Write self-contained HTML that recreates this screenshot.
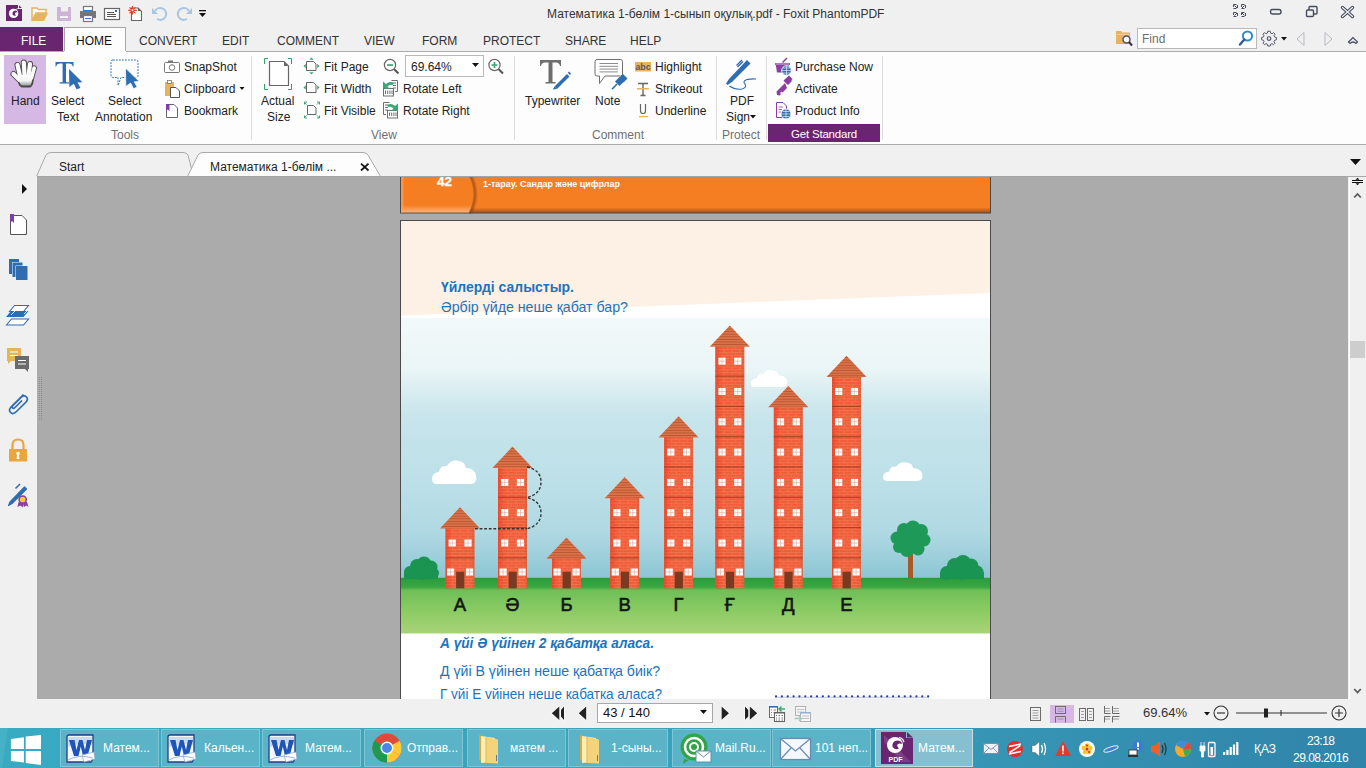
<!DOCTYPE html>
<html><head><meta charset="utf-8">
<style>
*{margin:0;padding:0;box-sizing:border-box}
html,body{width:1366px;height:768px;overflow:hidden;background:#f0f0f0;font-family:"Liberation Sans",sans-serif;font-size:12px;color:#222}
.a{position:absolute}
.t{position:absolute;white-space:nowrap;line-height:14px}
</style></head><body>
<!-- title bar -->
<div class="a" style="left:0;top:0;width:1366px;height:28px;background:#f0f0f0"></div>
<div class="t" style="left:547px;top:7px;color:#333">Математика 1-бөлім 1-сынып оқулық.pdf - Foxit PhantomPDF</div>
<svg class="a" style="left:0;top:0" width="220" height="27">
 <path d="M6 5H18V9H22V21H6Z" fill="#6a2570"/><path d="M19 5.2L21.8 8H19Z" fill="#6a2570"/>
 <circle cx="13.6" cy="13.4" r="4.7" fill="#fff"/><path d="M12.5 14.5Q12 11 15.5 10.5Q17.5 10.5 17.5 12.5Q16 12 15 13Q14.5 14 16 15.5Q14 16.5 12.5 14.5Z" fill="#6a2570"/>
 <path d="M16 9.5L18 8.5" stroke="#fff" stroke-width="0.8"/>
 <path d="M32 8H37L38.5 9.5H46V13H36L32 21Z" fill="#fff" stroke="#e8b25e" stroke-width="1.5"/>
 <path d="M35.5 13H48L44 21H32Z" fill="#e8b25e"/>
 <path d="M57 7H71V21H57Z" fill="#cdb3d6"/><rect x="61" y="7" width="7" height="4.5" fill="#f0f0f0"/><rect x="60" y="16" width="8" height="2" fill="#f0f0f0"/>
 <rect x="83.5" y="6.5" width="9" height="6" fill="#fff" stroke="#777" stroke-width="1.2"/><rect x="84" y="10" width="8" height="2" fill="#3b78c0"/>
 <path d="M80 11H96V18H80Z" fill="#777"/><rect x="83.5" y="15.5" width="9" height="6" fill="#fff" stroke="#777" stroke-width="1.2"/><rect x="85" y="18" width="6" height="1" fill="#3b78c0"/>
 <rect x="104.5" y="8.5" width="15" height="11" fill="#fff" stroke="#666" stroke-width="1.2"/><rect x="107" y="12" width="7" height="1" fill="#555"/><rect x="107" y="14" width="9" height="1" fill="#555"/><rect x="107" y="16" width="9" height="1" fill="#555"/><rect x="115" y="10" width="2" height="2" fill="#2f6fb5"/>
 <path d="M131.5 8H138L141.5 11.5V20.5H131.5Z" fill="#fff" stroke="#666" stroke-width="1.1"/><path d="M138 7.5L141.5 11H138Z" fill="#666"/>
 <path d="M132.5 6V14.6M128.2 10.3H136.8M129.5 7.3L135.5 13.3M135.5 7.3L129.5 13.3" stroke="#d9412b" stroke-width="1.2"/><circle cx="132.5" cy="10.3" r="1" fill="#fff"/>
 <path d="M155 11A6 6 0 1 1 157 19" fill="none" stroke="#a9c7e2" stroke-width="2"/><path d="M152 8V14H158Z" fill="#a9c7e2"/>
 <path d="M189 11A6 6 0 1 0 187 19" fill="none" stroke="#a9c7e2" stroke-width="2"/><path d="M192 8V14H186Z" fill="#a9c7e2"/>
 <rect x="199" y="10" width="7" height="1.3" fill="#111"/><path d="M199 13H206L202.5 17Z" fill="#111"/>
</svg>
<svg class="a" style="left:1225px;top:0" width="141" height="27">
 <g fill="none" stroke="#444c5e" stroke-width="1.2">
 <path d="M8.5 4.5H12.5V8.5H8.5ZM16.5 4.5H20.5V8.5H16.5ZM8.5 12.5H12.5V16.5H8.5ZM16.5 12.5H20.5V16.5H16.5Z" stroke-width="1" stroke-dasharray="3 1.5"/>
 <path d="M9.5 5.5L12 8M19.5 5.5L17 8M9.5 15.5L12 13M19.5 15.5L17 13" stroke-width="1"/>
 <rect x="45.5" y="9.5" width="10.5" height="4.5" rx="2" stroke-width="1.4"/>
 <rect x="81.5" y="10" width="7" height="6.5" rx="1" stroke-width="1.4"/><path d="M84 10V7.5Q84 6.5 85 6.5H91Q92 6.5 92 7.5V13Q92 14 91 14H88.5" stroke-width="1.4"/>
 <path d="M117.5 7.5L127.5 16.5M127.5 7.5L117.5 16.5" stroke-width="3.4" stroke-linecap="round"/><path d="M117.5 7.5L127.5 16.5M127.5 7.5L117.5 16.5" stroke="#f0f0f0" stroke-width="1.2" stroke-linecap="round"/>
 </g>
</svg>

<!-- menu row -->
<div class="a" style="left:0;top:27px;width:63px;height:24px;background:#6a2570"></div>
<div class="t" style="left:21px;top:34px;color:#fff">FILE</div>
<div class="a" style="left:64px;top:27px;width:62px;height:26px;background:#fdfdfd;border:1px solid #a6a6a6;border-bottom:none"></div>
<div class="t" style="left:76px;top:34px;color:#111">HOME</div>
<div class="t" style="left:139px;top:34px;color:#333">CONVERT</div>
<div class="t" style="left:222px;top:34px;color:#333">EDIT</div>
<div class="t" style="left:277px;top:34px;color:#333">COMMENT</div>
<div class="t" style="left:364px;top:34px;color:#333">VIEW</div>
<div class="t" style="left:422px;top:34px;color:#333">FORM</div>
<div class="t" style="left:483px;top:34px;color:#333">PROTECT</div>
<div class="t" style="left:565px;top:34px;color:#333">SHARE</div>
<div class="t" style="left:630px;top:34px;color:#333">HELP</div>

<!-- ribbon -->
<div class="a" style="left:0;top:51px;width:1366px;height:94px;background:#fdfdfd;border-top:1px solid #acacac;border-bottom:1px solid #ababab"></div>
<div class="a" style="left:64px;top:51px;width:62px;height:2px;background:#fdfdfd"></div>

<!-- find area -->
<svg class="a" style="left:1110px;top:27px" width="256" height="24">
 <path d="M6 4H11L12.5 5.5H20V17H6Z" fill="#e8b25e"/><path d="M7 7.5H19" stroke="#f6dcae" stroke-width="0.8"/>
 <circle cx="16.5" cy="12.5" r="3.5" fill="#fff" stroke="#555" stroke-width="1.5"/><path d="M19 15L22 18.5" stroke="#333" stroke-width="2"/>
</svg>
<div class="a" style="left:1137px;top:28px;width:120px;height:21px;background:#fff;border:1px solid #b9b9b9"></div>
<div class="t" style="left:1142px;top:32px;color:#6d6d6d;font-size:12px">Find</div>
<svg class="a" style="left:1235px;top:29px" width="22" height="20">
 <circle cx="12.5" cy="7" r="4.6" fill="none" stroke="#2f8ccc" stroke-width="2"/><path d="M9.3 10.5L5 15.5" stroke="#2a5e9c" stroke-width="2.4" stroke-linecap="round"/>
</svg>
<svg class="a" style="left:1258px;top:27px" width="108" height="24">
 <g transform="translate(11,12)" fill="none" stroke="#444c5e" stroke-width="1.1">
  <path d="M-1.5 -7H1.5L2 -4.8L3.8 -4L5.6 -5.3L7.4 -3.5L6.1 -1.7L6.8 0L9 0.6V3.4L6.8 4L6 5.8L7.3 7.6L5.5 9.4L3.7 8.1L2 8.8L1.5 11H-1.5L-2 8.8L-3.7 8.1L-5.5 9.4L-7.3 7.6L-6 5.8L-6.8 4L-9 3.4V0.6L-6.8 0L-6.1 -1.7L-7.4 -3.5L-5.6 -5.3L-3.8 -4L-2 -4.8Z" transform="translate(0,-2) scale(0.82)"/>
  <circle cx="0" cy="-0.4" r="1.8"/>
 </g>
 <path d="M23 10H29L26 13.5Z" fill="#111"/>
 <path d="M46 5.5V18.5L39 12Z" fill="none" stroke="#b5b9c2" stroke-width="1"/>
 <path d="M67 5.5V18.5L74 12Z" fill="none" stroke="#b5b9c2" stroke-width="1"/>
 <path d="M90.5 15L95 10.5L99.5 15L98 16.5Q95 13.5 92 16.5Z" fill="none" stroke="#444c5e" stroke-width="1.2"/>
</svg>

<!-- ribbon content -->
<div class="a" style="left:4px;top:55px;width:42px;height:69px;background:#d5b8e4"></div>
<svg class="a" style="left:0;top:52px" width="900" height="92">
 <!-- hand -->
 <defs><linearGradient id="hg" x1="0" y1="0" x2="0" y2="1"><stop offset="0" stop-color="#fdfdfd"/><stop offset="0.55" stop-color="#f4f4f4"/><stop offset="1" stop-color="#9a9a9a"/></linearGradient></defs>
 <g stroke="#4a4a4a" stroke-linecap="round" fill="none">
  <path d="M13.5 22L19.5 28" stroke-width="6"/><path d="M17.5 13L20 24" stroke-width="6"/><path d="M23.8 10.5L24.6 24" stroke-width="6"/><path d="M30 12L28.5 24" stroke-width="6"/><path d="M34.2 16L31.5 26" stroke-width="5.4"/>
  <path d="M19 24Q18 33 22 34.5H30Q33 33 33 24Z" fill="#4a4a4a" stroke-width="2"/>
 </g>
 <g stroke="url(#hg)" stroke-linecap="round" fill="none">
  <path d="M13.5 22L19.5 28" stroke-width="4.2" stroke="#f7f7f7"/><path d="M17.5 13L20 24" stroke-width="4.2" stroke="#fbfbfb"/><path d="M23.8 10.5L24.6 24" stroke-width="4.2" stroke="#fbfbfb"/><path d="M30 12L28.5 24" stroke-width="4.2" stroke="#fbfbfb"/><path d="M34.2 16L31.5 26" stroke-width="3.6" stroke="#fbfbfb"/>
 </g>
 <path d="M19 23Q18.5 32.5 22.3 33.6H29.7Q32.3 32.5 32.3 23Z" fill="url(#hg)"/>
 <!-- select text -->
 <path d="M55.5 10H73.5V14.5H72.8Q72.3 11.6 69 11.6H66V30.3H69V31.5H59.5V30.3H62.6V11.6H60Q56.7 11.6 56.2 14.5H55.5Z" fill="#2f6db3"/>
 <path d="M69 17L82.4 30.3L77.5 30.6L80.5 36L76.5 37.3L73.8 31.8L69.3 35Z" fill="#2f6db3"/>
 <!-- select annotation -->
 <path d="M113 8H136Q138 8 138 10V23.5Q138 25.5 136 25.5H121L118 33.5V25.5H113Q111 25.5 111 23.5V10Q111 8 113 8Z" fill="none" stroke="#2f6db3" stroke-width="1" stroke-dasharray="1.8 1.2"/>
 <path d="M125.5 16L139.3 29.5L134.3 29.8L137.3 35.3L133.4 36.6L130.6 31.1L125.8 34.5Z" fill="#2f6db3" stroke="#fdfdfd" stroke-width="0.8"/>
 <!-- snapshot -->
 <rect x="164.5" y="10.5" width="15" height="10" rx="1" fill="#fff" stroke="#777" stroke-width="1"/><rect x="168" y="8.5" width="5" height="2" fill="#777"/><circle cx="172" cy="15.5" r="2.8" fill="none" stroke="#777" stroke-width="1"/>
 <!-- clipboard -->
 <rect x="165" y="30" width="9" height="14" fill="#e8b25e"/><rect x="167.5" y="28.5" width="4" height="3" fill="#fff" stroke="#777" stroke-width="0.8"/>
 <path d="M170.5 35.5H176L179.5 39V45.5H170.5Z" fill="#fff" stroke="#555" stroke-width="1"/>
 <path d="M239.5 35H244.5L242 38Z" fill="#111"/>
 <!-- bookmark -->
 <path d="M166.5 52.5H174L177.5 56V65.5H166.5Z" fill="#fff" stroke="#666" stroke-width="1"/><path d="M166 52H169.5V59L167.7 57.5L166 59Z" fill="#7b3fa6"/>
 <!-- separator -->
 <rect x="251" y="4" width="1" height="84" fill="#dcdcdc"/>
 <!-- actual size -->
 <path d="M269.5 9.5H284L288.5 14V33.5H269.5Z" fill="#fff" stroke="#666" stroke-width="1.2"/><path d="M284 9.5V14H288.5Z" fill="#666"/>
 <path d="M264.5 12V6.5H268M288 6.5H291.5V12M264.5 32V37.5H268M288 37.5H291.5V32" fill="none" stroke="#2e9e6a" stroke-width="1"/>
 <!-- fit page -->
 <path d="M306.5 9.5H313.5L316 12V18.5H306.5Z" fill="#fff" stroke="#666" stroke-width="1"/>
 <path d="M311.5 5.5L309.3 7.8H313.7ZM311.5 22.5L309.3 20.2H313.7ZM303.5 14L305.8 11.8V16.2ZM319.5 14L317.2 11.8V16.2Z" fill="#3aa776"/>
 <path d="M306.5 30.5H313.5L316 33V40.5H306.5Z" fill="#fff" stroke="#666" stroke-width="1"/>
 <path d="M303.5 35.5L305.8 33.3V37.7ZM319.5 35.5L317.2 33.3V37.7Z" fill="#3aa776"/>
 <path d="M307.5 53.5H313.5L316 56V62.5H307.5Z" fill="#fff" stroke="#666" stroke-width="1"/>
 <path d="M304 50L306.5 52.5M304.5 52.5V50H307M319.5 50L317 52.5M317 50H319.5V52.5M304 66L306.5 63.5M304.5 63.5V66H307M319.5 66L317 63.5M317 66H319.5V63.5" stroke="#3aa776" stroke-width="1" fill="none"/>
 <!-- zoom out/in -->
 <circle cx="390" cy="13" r="5.6" fill="#fff" stroke="#666" stroke-width="1.2"/><path d="M394.2 17.2L398.5 21.5" stroke="#555" stroke-width="2"/><rect x="387" y="12.2" width="6" height="1.7" fill="#3aa776"/>
 <circle cx="494.5" cy="13" r="5.6" fill="#fff" stroke="#666" stroke-width="1.2"/><path d="M498.7 17.2L503 21.5" stroke="#555" stroke-width="2"/><path d="M491.5 13H497.5M494.5 10V16" stroke="#3aa776" stroke-width="1.7"/>
 <!-- rotate -->
 <g fill="none" stroke="#6f6f6f" stroke-width="1">
  <path d="M391.5 28.5H397.5V39.5H395M397.5 28.5"/><path d="M392 31H396M393 33.5H396M393 36H396"/>
  <rect x="383.5" y="36.5" width="10" height="7.5" fill="#fff"/><path d="M385.5 38.5V42M387.7 38.5V42M389.9 38.5V42M392 38.5V42"/>
  <path d="M389.5 50.5H383.5V62.5H386"/><path d="M385 53H388M385 55.5H388M385 58H388"/>
  <rect x="387.5" y="58.5" width="10" height="7.5" fill="#fff"/><path d="M389.5 60.5V64M391.7 60.5V64M393.9 60.5V64M396 60.5V64"/>
 </g>
 <path d="M383 29.5V36.5H389.5L387.5 34.5Q389.5 32 392.5 33L394 31.5Q390 28.5 386 32Z" fill="#3aa776"/>
 <path d="M398 51.5V58.5H391.5L393.5 56.5Q391.5 54 388.5 55L387 53.5Q391 50.5 395 54Z" fill="#3aa776"/>
 <rect x="514" y="4" width="1" height="84" fill="#dcdcdc"/>
 <!-- typewriter -->
 <path d="M540 8H561V14H560Q559.5 10.5 556 10.5H552.5V30H555.5V31.5H545.5V30H548.5V10.5H545Q541.5 10.5 541 14H540Z" fill="#6e6e6e"/>
 <path d="M554.5 34.5L567 22L569.5 24.5L557 37Z" fill="#2f6db3"/><path d="M567.8 20.8L569 19.6L571.2 21.8L570 23Z" fill="#2f6db3"/><path d="M554.5 34.5L552.8 37.5L557 37Z" fill="#2f6db3"/>
 <!-- note -->
 <path d="M597 7.5H620.5Q622.5 7.5 622.5 9.5V22Q622.5 24 620.5 24H605L599.5 31.5V24H597Q595 24 595 22V9.5Q595 7.5 597 7.5Z" fill="#fff" stroke="#6e6e6e" stroke-width="1"/>
 <path d="M599.5 11.5H618M599.5 14.3H618M599.5 17.1H618M599.5 19.9H618" stroke="#6e6e6e" stroke-width="0.8"/>
 <path d="M619 26L623 22L627.5 26.5L623.5 30.5Z" fill="#2f6db3"/><path d="M615 29.5L619.5 25L624 29.5L619.5 34Z" fill="#2f6db3"/><path d="M617 32L612 37.3" stroke="#2f6db3" stroke-width="1.6"/>
 <!-- highlight -->
 <rect x="635" y="10" width="16" height="9.5" fill="#e8b25e"/>
 <text x="635.5" y="18" font-family="Liberation Sans" font-size="9" font-weight="bold" fill="#5a5a5a" textLength="15" lengthAdjust="spacingAndGlyphs">abc</text>
 <path d="M638 31.5H648M643 31.5V43.5M640.5 43.5H645.5" stroke="#666" stroke-width="1.4" fill="none"/><rect x="637" y="36" width="12" height="1.5" fill="#e8b25e"/>
 <path d="M640.5 52V59Q640.5 61.5 643 61.5Q645.5 61.5 645.5 59V52" stroke="#666" stroke-width="1.2" fill="none"/><rect x="639" y="64" width="9" height="1.2" fill="#e8b25e"/>
 <rect x="716" y="4" width="1" height="84" fill="#dcdcdc"/>
 <!-- pdf sign -->
 <path d="M747 8L750.5 11.5L732 30L727.5 33L726 31.5L729 27Z" fill="#2f6db3"/>
 <path d="M736.5 13.5L742 8M737.5 15L743 9.5" stroke="#2f6db3" stroke-width="1.3"/>
 <path d="M729.5 34Q735 38 742 37Q747 35.5 745 32Q743 30 745 28.5Q748 26.5 756 27" fill="none" stroke="#2f6db3" stroke-width="1.1"/>
 <path d="M750 63H756L753 66.5Z" fill="#111"/>
 <rect x="766" y="4" width="1" height="84" fill="#dcdcdc"/>
 <!-- purchase now -->
 <path d="M782.5 10.5L787 6" stroke="#8a3fa0" stroke-width="1.4"/>
 <path d="M775 11H790V13H789L787.5 20.5H777L775.8 13H775Z" fill="#8a3fa0"/><rect x="775.5" y="11" width="14" height="2" fill="#b07cc0"/>
 <circle cx="786.5" cy="18.5" r="4.8" fill="#2f6db3" stroke="#fdfdfd" stroke-width="0.9"/><path d="M781.7 18.5H791.3M786.5 13.7V23.3M783 16H790M783 21H790" stroke="#fff" stroke-width="0.6"/>
 <!-- activate -->
 <path d="M784 29L788 25L792 29L788 33Z" fill="#8a3fa0" transform="rotate(0)"/><path d="M783.5 28.5L789 23.5L792.5 27L787.5 32.5Z" fill="#8a3fa0"/>
 <path d="M785 31L776.5 39.5L777 43L779.5 43.5L781 42L780 41L781.5 39.5L782.5 40.5L787 36Z" fill="#8a3fa0"/>
 <!-- product info -->
 <path d="M776.5 50.5H783L786.5 54V65.5H776.5Z" fill="#fff" stroke="#8a3fa0" stroke-width="1"/><path d="M778.5 55H783M778.5 57.5H782M778.5 60H781" stroke="#8a3fa0" stroke-width="0.8"/>
 <circle cx="786" cy="62" r="5" fill="#2f6db3" stroke="#fff" stroke-width="0.8"/><path d="M781 62H791M786 57V67M782.5 59.5H789.5M782.5 64.5H789.5" stroke="#fff" stroke-width="0.6"/>
 <rect x="882" y="4" width="1" height="84" fill="#dcdcdc"/>
</svg>
<div class="a" style="left:768px;top:124px;width:112px;height:18px;background:#6a2570"></div>
<div class="t" style="left:11px;top:94px">Hand</div>
<div class="t" style="left:51px;top:94px">Select</div>
<div class="t" style="left:57px;top:110px">Text</div>
<div class="t" style="left:108px;top:94px">Select</div>
<div class="t" style="left:95px;top:110px">Annotation</div>
<div class="t" style="left:184px;top:60px">SnapShot</div>
<div class="t" style="left:184px;top:82px">Clipboard</div>
<div class="t" style="left:184px;top:104px">Bookmark</div>
<div class="t" style="left:111px;top:128px;color:#707070">Tools</div>
<div class="t" style="left:261px;top:94px">Actual</div>
<div class="t" style="left:267px;top:110px">Size</div>
<div class="t" style="left:324px;top:60px">Fit Page</div>
<div class="t" style="left:324px;top:82px">Fit Width</div>
<div class="t" style="left:324px;top:104px">Fit Visible</div>
<div class="a" style="left:405px;top:55px;width:79px;height:22px;background:#fff;border:1px solid #b9b9b9"></div>
<div class="t" style="left:411px;top:60px">69.64%</div>
<svg class="a" style="left:472px;top:63px" width="8" height="5"><path d="M0 0H7L3.5 4Z" fill="#111"/></svg>
<div class="t" style="left:403px;top:82px">Rotate Left</div>
<div class="t" style="left:403px;top:104px">Rotate Right</div>
<div class="t" style="left:371px;top:128px;color:#707070">View</div>
<div class="t" style="left:525px;top:94px">Typewriter</div>
<div class="t" style="left:595px;top:94px">Note</div>
<div class="t" style="left:655px;top:60px">Highlight</div>
<div class="t" style="left:655px;top:82px">Strikeout</div>
<div class="t" style="left:655px;top:104px">Underline</div>
<div class="t" style="left:592px;top:128px;color:#707070">Comment</div>
<div class="t" style="left:730px;top:94px">PDF</div>
<div class="t" style="left:726px;top:110px">Sign</div>
<div class="t" style="left:722px;top:128px;color:#707070">Protect</div>
<div class="t" style="left:795px;top:60px">Purchase Now</div>
<div class="t" style="left:795px;top:82px">Activate</div>
<div class="t" style="left:795px;top:104px">Product Info</div>
<div class="t" style="left:791px;top:127px;color:#fff;font-size:11.5px;letter-spacing:-0.2px">Get Standard</div>

<!-- tab bar -->
<div class="a" style="left:0;top:145px;width:1366px;height:31px;background:#f0f0f0"></div>
<svg class="a" style="left:0;top:145px" width="1366" height="32">
 <path d="M36.5 31.5L46 10Q47.5 7.5 51 7.5H183Q186.5 7.5 188 10L193.5 31.5" fill="#f0f0f0" stroke="#a9a9a9" stroke-width="1"/>
 <path d="M187.5 31.5L198 10Q199.5 7.5 203 7.5H363Q366.5 7.5 368 10L380.5 31.5" fill="#fdfdfd" stroke="#a9a9a9" stroke-width="1"/>
 <path d="M361 18.7L368.5 25.5M368.5 18.7L361 25.5" stroke="#111" stroke-width="1.7"/>
 <path d="M1350 14H1361L1355.5 20Z" fill="#111"/>
</svg>
<div class="t" style="left:59px;top:160px;color:#222">Start</div>
<div class="t" style="left:210px;top:160px;color:#222">Математика 1-бөлім ...</div>

<!-- workspace -->
<div class="a" style="left:37px;top:176px;width:1311px;height:524px;background:#ababab"></div>
<div class="a" style="left:0;top:176px;width:37px;height:524px;background:#f0f0f0"></div>
<div class="a" style="left:1349px;top:176px;width:17px;height:524px;background:#f0f0f0;border-left:1px solid #fff"></div><div class="a" style="left:1349px;top:176px;width:17px;height:1px;background:#a8a8a8"></div>
<svg class="a" style="left:0;top:176px" width="60" height="524">
 <path d="M22 8V18L27 13Z" fill="#111"/>
 <!-- bookmark -->
 <path d="M10.5 39.5H22L26.5 44V58.5H10.5Z" fill="#fff" stroke="#555" stroke-width="1"/><path d="M10 38H14V47L12 45L10 47Z" fill="#7b3fa6"/>
 <!-- pages -->
 <path d="M9 83H19V86H12V98H9Z" fill="#2f6db3"/><path d="M12.5 86.5H22.5V89.5H15.5V101H12.5Z" fill="#2f6db3"/><rect x="16" y="90" width="11.5" height="14" fill="#2f6db3"/>
 <!-- layers -->
 <path d="M9.5 135.5L14.5 129.5H28.5L23.5 135.5Z" fill="#fff" stroke="#2f6db3" stroke-width="1.1"/>
 <path d="M6 141L11 135H28.5L23.5 141Z" fill="#2f6db3"/>
 <path d="M6.5 149L11.5 143H28.5L23.5 149Z" fill="#fff" stroke="#2f6db3" stroke-width="1.1"/>
 <path d="M11 139L15 135M24 138L28 134" stroke="#fff" stroke-width="0.8"/>
 <!-- comments -->
 <path d="M7 172H21V185H11L8 188V185H7Z" fill="#e8b25e"/><path d="M10 176H18M10 179.5H18" stroke="#fff" stroke-width="1.2"/>
 <path d="M15 180H29V193H28V196L25 193H15Z" fill="#6b6b6b"/><path d="M18 184.5H26M18 188H26" stroke="#fff" stroke-width="1.2"/>
 <path d="M14 180V187H21V180Z" fill="#f0f0f0" opacity="0"/>
 <!-- attach -->
 <path d="M23.5 218.5L11.5 230.5Q8 234 10.5 236.5Q13 239 16.5 235.5L26 226Q28.5 223 26.5 221Q24 218.5 21 221.5L13 229.5Q11.5 231 12.5 232Q13.5 233 15 231.5L22 224.5" fill="none" stroke="#2f6db3" stroke-width="1.7"/>
 <!-- lock -->
 <path d="M12.5 274V269Q12.5 263.5 18 263.5Q23.5 263.5 23.5 269V274" fill="none" stroke="#e8a640" stroke-width="2.2"/>
 <rect x="9" y="273" width="18" height="12.5" fill="#e8a640"/><circle cx="18" cy="277.5" r="1.7" fill="#fff"/><path d="M17.2 278L16.6 283H19.4L18.8 278Z" fill="#fff"/>
 <!-- sign -->
 <path d="M24.5 311L26.5 313L12 327.5L8.5 329.5L10 326Z" fill="#2f6db3" stroke="#2f6db3" stroke-width="1.2" stroke-linejoin="round"/>
 <path d="M15.5 312.5L20 308" stroke="#2f6db3" stroke-width="1.6"/>
 <path d="M18.5 326L17.5 331L20.5 329.5L23 331.5L23.5 327Z" fill="#8a3fa0"/><path d="M22.5 326L24 331L26.5 329.5L28.5 331L27 326Z" fill="#8a3fa0"/>
 <circle cx="22.7" cy="323.5" r="3.6" fill="#f5c842" stroke="#8a3fa0" stroke-width="1.5"/>
</svg>
<svg class="a" style="left:38px;top:376px" width="6" height="46"><g fill="#8c8c8c">
 <rect x="1" y="1" width="1" height="1"/><rect x="3" y="1" width="1" height="1"/>
</g><path d="M1.5 1V45M3.5 1V45" stroke="#8c8c8c" stroke-width="1" stroke-dasharray="1 1"/></svg>
<svg class="a" style="left:1348px;top:176px" width="18" height="524">
 <path d="M4 4.5H15M4 6.5H15" stroke="#111" stroke-width="1.1"/><path d="M7.5 3.8L9.5 1.8L11.5 3.8ZM7.5 7.2L9.5 9.2L11.5 7.2Z" fill="#111"/>
 <path d="M6.2 21.5L9.5 18L12.8 21.5" fill="none" stroke="#5a5a5a" stroke-width="1.8"/>
 <rect x="2" y="165" width="15" height="17" fill="#cdcdcd"/>
 <path d="M6.2 513L9.5 516.5L12.8 513" fill="none" stroke="#5a5a5a" stroke-width="1.8"/>
</svg>

<!-- PDF -->
<svg class="a" style="left:400px;top:176px" width="591" height="523" viewBox="0 0 591 523">
<defs>
 <pattern id="brick" width="8" height="5.8" patternUnits="userSpaceOnUse">
  <rect width="8" height="5.8" fill="#f05c38"/>
  <rect y="2.5" width="8" height="0.5" fill="#f5906a"/>
  <rect y="5.4" width="8" height="0.5" fill="#f5906a"/>
  <rect x="3.8" y="0" width="0.5" height="2.5" fill="#f5906a"/>
  <rect x="7.8" y="2.9" width="0.5" height="2.5" fill="#f5906a"/>
 </pattern>
 <pattern id="tiles" width="3" height="2.6" patternUnits="userSpaceOnUse">
  <rect width="3" height="2.6" fill="#db7249"/>
  <rect y="1.8" width="3" height="0.8" fill="#b4532e"/>
 </pattern>
 <linearGradient id="bedge" x1="0" y1="0" x2="1" y2="0">
  <stop offset="0" stop-color="#e02a1a" stop-opacity="0.45"/><stop offset="0.25" stop-color="#e02a1a" stop-opacity="0"/><stop offset="0.85" stop-color="#a03010" stop-opacity="0"/><stop offset="1" stop-color="#a03010" stop-opacity="0.15"/>
 </linearGradient>
 <linearGradient id="roof" x1="0" y1="0" x2="0" y2="1">
  <stop offset="0" stop-color="#d6714a"/><stop offset="1" stop-color="#c2653f"/>
 </linearGradient>
 <linearGradient id="sky" x1="0" y1="0" x2="0" y2="1">
  <stop offset="0" stop-color="#f2f9fa"/><stop offset="0.2" stop-color="#eaf5f7"/><stop offset="0.3" stop-color="#d5ebf0"/><stop offset="0.39" stop-color="#c6e4eb"/><stop offset="0.625" stop-color="#bde0e8"/><stop offset="0.82" stop-color="#b0d9e3"/><stop offset="0.91" stop-color="#9fd0dc"/><stop offset="1" stop-color="#8cc5d4"/>
 </linearGradient>
 <linearGradient id="ground" x1="0" y1="0" x2="0" y2="1">
  <stop offset="0" stop-color="#2b9b3b"/><stop offset="0.17" stop-color="#38a642"/><stop offset="0.23" stop-color="#6fbf57"/><stop offset="0.6" stop-color="#8ccb64"/><stop offset="1" stop-color="#a8d478"/>
 </linearGradient>
 <linearGradient id="orange" x1="0" y1="0" x2="0" y2="1">
  <stop offset="0" stop-color="#f57e22"/><stop offset="0.86" stop-color="#f57e22"/><stop offset="1" stop-color="#a9531a"/>
 </linearGradient>
</defs>
<filter id="blur1" x="-50%" y="-50%" width="200%" height="200%"><feGaussianBlur stdDeviation="1"/></filter>
<linearGradient id="tabg" x1="0" y1="0" x2="0" y2="1"><stop offset="0" stop-color="#f57e22"/><stop offset="0.8" stop-color="#f57e22"/><stop offset="1" stop-color="#fcb27a"/></linearGradient>
<rect x="0" y="0" width="591" height="37.5" fill="#4a4a4a"/>
<rect x="1" y="0" width="589" height="36.5" fill="url(#orange)"/>
<path d="M70 -1Q80 18 70 37" fill="none" stroke="#7a3a10" stroke-width="2.2" opacity="0.8" filter="url(#blur1)"/>
<path d="M1 0H69Q77.5 18 69 36.5H1Z" fill="url(#tabg)"/>
<rect x="1" y="0" width="2.5" height="36.5" fill="#fba466" opacity="0.6"/>
<text x="37" y="10" font-family="Liberation Sans" font-size="13.5" font-weight="bold" fill="#fff" stroke="#fff" stroke-width="0.3">42</text>
<text x="83" y="10.5" font-family="Liberation Sans" font-size="8.6" font-weight="bold" fill="#fff" textLength="137" lengthAdjust="spacingAndGlyphs">1-тарау. Сандар және цифрлар</text>
<rect x="0" y="44" width="591" height="480" fill="#4a4a4a"/>
<rect x="1" y="45" width="589" height="480" fill="#fff"/>
<path d="M1 45H590V117L1 139.5Z" fill="#fdf1e6"/>
<rect x="1" y="142" width="589" height="259.5" fill="url(#sky)"/>
<g fill="#fff" transform="translate(32,283) scale(1,1)"><path d="M5 25Q0 25 0 20Q0 14 7 13Q8 6 15 7Q19 0 27 2Q33 3 34 9Q42 9 44 16Q46 25 38 25Z"/></g>
<g fill="#fff" transform="translate(351,193) scale(0.82,0.72)"><path d="M5 25Q0 25 0 20Q0 14 7 13Q8 6 15 7Q19 0 27 2Q33 3 34 9Q42 9 44 16Q46 25 38 25Z"/></g>
<g fill="#fff" transform="translate(483,285) scale(0.89,0.8)"><path d="M5 25Q0 25 0 20Q0 14 7 13Q8 6 15 7Q19 0 27 2Q33 3 34 9Q42 9 44 16Q46 25 38 25Z"/></g>
<rect x="1" y="401.5" width="589" height="56" fill="url(#ground)"/>
<g><circle cx="10" cy="396" r="6" fill="#1a9450"/><circle cx="17" cy="390" r="7" fill="#1a9450"/><circle cx="24" cy="388" r="7.5" fill="#1a9450"/><circle cx="31" cy="391" r="6.5" fill="#1a9450"/><circle cx="34" cy="397" r="5" fill="#1a9450"/><circle cx="22" cy="396" r="8" fill="#1a9450"/><rect x="4" y="396" width="34" height="7" fill="#1a9450"/></g>
<g><circle cx="547" cy="397" r="7" fill="#1a9452"/><circle cx="555" cy="390" r="8" fill="#1a9452"/><circle cx="563" cy="387" r="8" fill="#1a9452"/><circle cx="571" cy="390" r="7.5" fill="#1a9452"/><circle cx="577" cy="396" r="6.5" fill="#1a9452"/><circle cx="562" cy="395" r="9" fill="#1a9452"/><rect x="540" y="396" width="44" height="7" fill="#1a9452"/></g>
<rect x="508" y="378" width="5" height="24" fill="#a65a28"/>
<g><circle cx="497" cy="362" r="6.5" fill="#1f9957"/><circle cx="504" cy="354" r="7" fill="#1f9957"/><circle cx="513" cy="352" r="7.5" fill="#1f9957"/><circle cx="521" cy="355" r="7" fill="#1f9957"/><circle cx="524" cy="364" r="6.5" fill="#1f9957"/><circle cx="518" cy="373" r="6.5" fill="#1f9957"/><circle cx="507" cy="374" r="7" fill="#1f9957"/><circle cx="499" cy="371" r="6" fill="#1f9957"/><circle cx="510" cy="364" r="11" fill="#1f9957"/></g>
<rect x="45.5" y="351.7" width="29" height="60.6" fill="url(#brick)"/>
<rect x="45.5" y="351.7" width="29" height="60.6" fill="url(#bedge)"/>
<rect x="45.5" y="381.4" width="29" height="1" fill="#9a3a1e" opacity="0.85"/>
<rect x="48.6" y="363.5" width="7.2" height="7" fill="#fff"/>
<path d="M52.2 363.5V370.5M48.6 367H55.8" stroke="#d9a594" stroke-width="0.6"/>
<rect x="64.4" y="363.5" width="7.2" height="7" fill="#fff"/>
<path d="M68 363.5V370.5M64.4 367H71.6" stroke="#d9a594" stroke-width="0.6"/>
<rect x="47" y="392.5" width="7.2" height="7" fill="#fff"/>
<path d="M50.6 392.5V399.5M47 396H54.2" stroke="#d9a594" stroke-width="0.6"/>
<rect x="66" y="392.5" width="7.2" height="7" fill="#fff"/>
<path d="M69.6 392.5V399.5M66 396H73.2" stroke="#d9a594" stroke-width="0.6"/>
<rect x="56.1" y="395.8" width="8.2" height="16.5" fill="#7a3a22"/>
<path d="M60 331.2L39.9 352.5H80.1Z" fill="url(#tiles)"/>
<text x="60" y="435.3" text-anchor="middle" font-family="Liberation Sans" font-size="18.5" fill="#141414" stroke="#141414" stroke-width="0.6">А</text>
<rect x="98" y="291.1" width="29" height="121.2" fill="url(#brick)"/>
<rect x="98" y="291.1" width="29" height="121.2" fill="url(#bedge)"/>
<rect x="98" y="320.8" width="29" height="1" fill="#9a3a1e" opacity="0.85"/>
<rect x="98" y="351.1" width="29" height="1" fill="#9a3a1e" opacity="0.85"/>
<rect x="98" y="381.4" width="29" height="1" fill="#9a3a1e" opacity="0.85"/>
<rect x="101.1" y="302.9" width="7.2" height="7" fill="#fff"/>
<path d="M104.7 302.9V309.9M101.1 306.4H108.3" stroke="#d9a594" stroke-width="0.6"/>
<rect x="116.9" y="302.9" width="7.2" height="7" fill="#fff"/>
<path d="M120.5 302.9V309.9M116.9 306.4H124.1" stroke="#d9a594" stroke-width="0.6"/>
<rect x="101.1" y="333.2" width="7.2" height="7" fill="#fff"/>
<path d="M104.7 333.2V340.2M101.1 336.7H108.3" stroke="#d9a594" stroke-width="0.6"/>
<rect x="116.9" y="333.2" width="7.2" height="7" fill="#fff"/>
<path d="M120.5 333.2V340.2M116.9 336.7H124.1" stroke="#d9a594" stroke-width="0.6"/>
<rect x="101.1" y="363.5" width="7.2" height="7" fill="#fff"/>
<path d="M104.7 363.5V370.5M101.1 367H108.3" stroke="#d9a594" stroke-width="0.6"/>
<rect x="116.9" y="363.5" width="7.2" height="7" fill="#fff"/>
<path d="M120.5 363.5V370.5M116.9 367H124.1" stroke="#d9a594" stroke-width="0.6"/>
<rect x="99.5" y="392.5" width="7.2" height="7" fill="#fff"/>
<path d="M103.1 392.5V399.5M99.5 396H106.7" stroke="#d9a594" stroke-width="0.6"/>
<rect x="118.5" y="392.5" width="7.2" height="7" fill="#fff"/>
<path d="M122.1 392.5V399.5M118.5 396H125.7" stroke="#d9a594" stroke-width="0.6"/>
<rect x="108.6" y="395.8" width="8.2" height="16.5" fill="#7a3a22"/>
<path d="M112.5 270.6L92.4 291.9H132.6Z" fill="url(#tiles)"/>
<text x="112.5" y="435.3" text-anchor="middle" font-family="Liberation Sans" font-size="18.5" fill="#141414" stroke="#141414" stroke-width="0.6">Ә</text>
<rect x="152" y="382" width="29" height="30.3" fill="url(#brick)"/>
<rect x="152" y="382" width="29" height="30.3" fill="url(#bedge)"/>
<rect x="153.5" y="392.5" width="7.2" height="7" fill="#fff"/>
<path d="M157.1 392.5V399.5M153.5 396H160.7" stroke="#d9a594" stroke-width="0.6"/>
<rect x="172.5" y="392.5" width="7.2" height="7" fill="#fff"/>
<path d="M176.1 392.5V399.5M172.5 396H179.7" stroke="#d9a594" stroke-width="0.6"/>
<rect x="162.6" y="395.8" width="8.2" height="16.5" fill="#7a3a22"/>
<path d="M166.5 361.5L146.4 382.8H186.6Z" fill="url(#tiles)"/>
<text x="166.5" y="435.3" text-anchor="middle" font-family="Liberation Sans" font-size="18.5" fill="#141414" stroke="#141414" stroke-width="0.6">Б</text>
<rect x="210.2" y="321.4" width="29" height="90.9" fill="url(#brick)"/>
<rect x="210.2" y="321.4" width="29" height="90.9" fill="url(#bedge)"/>
<rect x="210.2" y="351.1" width="29" height="1" fill="#9a3a1e" opacity="0.85"/>
<rect x="210.2" y="381.4" width="29" height="1" fill="#9a3a1e" opacity="0.85"/>
<rect x="213.3" y="333.2" width="7.2" height="7" fill="#fff"/>
<path d="M216.9 333.2V340.2M213.3 336.7H220.5" stroke="#d9a594" stroke-width="0.6"/>
<rect x="229.1" y="333.2" width="7.2" height="7" fill="#fff"/>
<path d="M232.7 333.2V340.2M229.1 336.7H236.3" stroke="#d9a594" stroke-width="0.6"/>
<rect x="213.3" y="363.5" width="7.2" height="7" fill="#fff"/>
<path d="M216.9 363.5V370.5M213.3 367H220.5" stroke="#d9a594" stroke-width="0.6"/>
<rect x="229.1" y="363.5" width="7.2" height="7" fill="#fff"/>
<path d="M232.7 363.5V370.5M229.1 367H236.3" stroke="#d9a594" stroke-width="0.6"/>
<rect x="211.7" y="392.5" width="7.2" height="7" fill="#fff"/>
<path d="M215.3 392.5V399.5M211.7 396H218.9" stroke="#d9a594" stroke-width="0.6"/>
<rect x="230.7" y="392.5" width="7.2" height="7" fill="#fff"/>
<path d="M234.3 392.5V399.5M230.7 396H237.9" stroke="#d9a594" stroke-width="0.6"/>
<rect x="220.8" y="395.8" width="8.2" height="16.5" fill="#7a3a22"/>
<path d="M224.7 300.9L204.6 322.2H244.8Z" fill="url(#tiles)"/>
<text x="224.7" y="435.3" text-anchor="middle" font-family="Liberation Sans" font-size="18.5" fill="#141414" stroke="#141414" stroke-width="0.6">В</text>
<rect x="264.1" y="260.8" width="29" height="151.5" fill="url(#brick)"/>
<rect x="264.1" y="260.8" width="29" height="151.5" fill="url(#bedge)"/>
<rect x="264.1" y="290.5" width="29" height="1" fill="#9a3a1e" opacity="0.85"/>
<rect x="264.1" y="320.8" width="29" height="1" fill="#9a3a1e" opacity="0.85"/>
<rect x="264.1" y="351.1" width="29" height="1" fill="#9a3a1e" opacity="0.85"/>
<rect x="264.1" y="381.4" width="29" height="1" fill="#9a3a1e" opacity="0.85"/>
<rect x="267.2" y="272.6" width="7.2" height="7" fill="#fff"/>
<path d="M270.8 272.6V279.6M267.2 276.1H274.4" stroke="#d9a594" stroke-width="0.6"/>
<rect x="283" y="272.6" width="7.2" height="7" fill="#fff"/>
<path d="M286.6 272.6V279.6M283 276.1H290.2" stroke="#d9a594" stroke-width="0.6"/>
<rect x="267.2" y="302.9" width="7.2" height="7" fill="#fff"/>
<path d="M270.8 302.9V309.9M267.2 306.4H274.4" stroke="#d9a594" stroke-width="0.6"/>
<rect x="283" y="302.9" width="7.2" height="7" fill="#fff"/>
<path d="M286.6 302.9V309.9M283 306.4H290.2" stroke="#d9a594" stroke-width="0.6"/>
<rect x="267.2" y="333.2" width="7.2" height="7" fill="#fff"/>
<path d="M270.8 333.2V340.2M267.2 336.7H274.4" stroke="#d9a594" stroke-width="0.6"/>
<rect x="283" y="333.2" width="7.2" height="7" fill="#fff"/>
<path d="M286.6 333.2V340.2M283 336.7H290.2" stroke="#d9a594" stroke-width="0.6"/>
<rect x="267.2" y="363.5" width="7.2" height="7" fill="#fff"/>
<path d="M270.8 363.5V370.5M267.2 367H274.4" stroke="#d9a594" stroke-width="0.6"/>
<rect x="283" y="363.5" width="7.2" height="7" fill="#fff"/>
<path d="M286.6 363.5V370.5M283 367H290.2" stroke="#d9a594" stroke-width="0.6"/>
<rect x="265.6" y="392.5" width="7.2" height="7" fill="#fff"/>
<path d="M269.2 392.5V399.5M265.6 396H272.8" stroke="#d9a594" stroke-width="0.6"/>
<rect x="284.6" y="392.5" width="7.2" height="7" fill="#fff"/>
<path d="M288.2 392.5V399.5M284.6 396H291.8" stroke="#d9a594" stroke-width="0.6"/>
<rect x="274.7" y="395.8" width="8.2" height="16.5" fill="#7a3a22"/>
<path d="M278.6 240.3L258.5 261.6H298.7Z" fill="url(#tiles)"/>
<text x="278.6" y="435.3" text-anchor="middle" font-family="Liberation Sans" font-size="18.5" fill="#141414" stroke="#141414" stroke-width="0.6">Г</text>
<rect x="315.3" y="169.9" width="29" height="242.4" fill="url(#brick)"/>
<rect x="315.3" y="169.9" width="29" height="242.4" fill="url(#bedge)"/>
<rect x="315.3" y="199.6" width="29" height="1" fill="#9a3a1e" opacity="0.85"/>
<rect x="315.3" y="229.9" width="29" height="1" fill="#9a3a1e" opacity="0.85"/>
<rect x="315.3" y="260.2" width="29" height="1" fill="#9a3a1e" opacity="0.85"/>
<rect x="315.3" y="290.5" width="29" height="1" fill="#9a3a1e" opacity="0.85"/>
<rect x="315.3" y="320.8" width="29" height="1" fill="#9a3a1e" opacity="0.85"/>
<rect x="315.3" y="351.1" width="29" height="1" fill="#9a3a1e" opacity="0.85"/>
<rect x="315.3" y="381.4" width="29" height="1" fill="#9a3a1e" opacity="0.85"/>
<rect x="318.4" y="181.7" width="7.2" height="7" fill="#fff"/>
<path d="M322 181.7V188.7M318.4 185.2H325.6" stroke="#d9a594" stroke-width="0.6"/>
<rect x="334.2" y="181.7" width="7.2" height="7" fill="#fff"/>
<path d="M337.8 181.7V188.7M334.2 185.2H341.4" stroke="#d9a594" stroke-width="0.6"/>
<rect x="318.4" y="212" width="7.2" height="7" fill="#fff"/>
<path d="M322 212V219M318.4 215.5H325.6" stroke="#d9a594" stroke-width="0.6"/>
<rect x="334.2" y="212" width="7.2" height="7" fill="#fff"/>
<path d="M337.8 212V219M334.2 215.5H341.4" stroke="#d9a594" stroke-width="0.6"/>
<rect x="318.4" y="242.3" width="7.2" height="7" fill="#fff"/>
<path d="M322 242.3V249.3M318.4 245.8H325.6" stroke="#d9a594" stroke-width="0.6"/>
<rect x="334.2" y="242.3" width="7.2" height="7" fill="#fff"/>
<path d="M337.8 242.3V249.3M334.2 245.8H341.4" stroke="#d9a594" stroke-width="0.6"/>
<rect x="318.4" y="272.6" width="7.2" height="7" fill="#fff"/>
<path d="M322 272.6V279.6M318.4 276.1H325.6" stroke="#d9a594" stroke-width="0.6"/>
<rect x="334.2" y="272.6" width="7.2" height="7" fill="#fff"/>
<path d="M337.8 272.6V279.6M334.2 276.1H341.4" stroke="#d9a594" stroke-width="0.6"/>
<rect x="318.4" y="302.9" width="7.2" height="7" fill="#fff"/>
<path d="M322 302.9V309.9M318.4 306.4H325.6" stroke="#d9a594" stroke-width="0.6"/>
<rect x="334.2" y="302.9" width="7.2" height="7" fill="#fff"/>
<path d="M337.8 302.9V309.9M334.2 306.4H341.4" stroke="#d9a594" stroke-width="0.6"/>
<rect x="318.4" y="333.2" width="7.2" height="7" fill="#fff"/>
<path d="M322 333.2V340.2M318.4 336.7H325.6" stroke="#d9a594" stroke-width="0.6"/>
<rect x="334.2" y="333.2" width="7.2" height="7" fill="#fff"/>
<path d="M337.8 333.2V340.2M334.2 336.7H341.4" stroke="#d9a594" stroke-width="0.6"/>
<rect x="318.4" y="363.5" width="7.2" height="7" fill="#fff"/>
<path d="M322 363.5V370.5M318.4 367H325.6" stroke="#d9a594" stroke-width="0.6"/>
<rect x="334.2" y="363.5" width="7.2" height="7" fill="#fff"/>
<path d="M337.8 363.5V370.5M334.2 367H341.4" stroke="#d9a594" stroke-width="0.6"/>
<rect x="316.8" y="392.5" width="7.2" height="7" fill="#fff"/>
<path d="M320.4 392.5V399.5M316.8 396H324" stroke="#d9a594" stroke-width="0.6"/>
<rect x="335.8" y="392.5" width="7.2" height="7" fill="#fff"/>
<path d="M339.4 392.5V399.5M335.8 396H343" stroke="#d9a594" stroke-width="0.6"/>
<rect x="325.9" y="395.8" width="8.2" height="16.5" fill="#7a3a22"/>
<path d="M329.8 149.4L309.7 170.7H349.9Z" fill="url(#tiles)"/>
<text x="329.8" y="435.3" text-anchor="middle" font-family="Liberation Sans" font-size="18.5" fill="#141414" stroke="#141414" stroke-width="0.6">Ғ</text>
<rect x="373.8" y="230.5" width="29" height="181.8" fill="url(#brick)"/>
<rect x="373.8" y="230.5" width="29" height="181.8" fill="url(#bedge)"/>
<rect x="373.8" y="260.2" width="29" height="1" fill="#9a3a1e" opacity="0.85"/>
<rect x="373.8" y="290.5" width="29" height="1" fill="#9a3a1e" opacity="0.85"/>
<rect x="373.8" y="320.8" width="29" height="1" fill="#9a3a1e" opacity="0.85"/>
<rect x="373.8" y="351.1" width="29" height="1" fill="#9a3a1e" opacity="0.85"/>
<rect x="373.8" y="381.4" width="29" height="1" fill="#9a3a1e" opacity="0.85"/>
<rect x="376.9" y="242.3" width="7.2" height="7" fill="#fff"/>
<path d="M380.5 242.3V249.3M376.9 245.8H384.1" stroke="#d9a594" stroke-width="0.6"/>
<rect x="392.7" y="242.3" width="7.2" height="7" fill="#fff"/>
<path d="M396.3 242.3V249.3M392.7 245.8H399.9" stroke="#d9a594" stroke-width="0.6"/>
<rect x="376.9" y="272.6" width="7.2" height="7" fill="#fff"/>
<path d="M380.5 272.6V279.6M376.9 276.1H384.1" stroke="#d9a594" stroke-width="0.6"/>
<rect x="392.7" y="272.6" width="7.2" height="7" fill="#fff"/>
<path d="M396.3 272.6V279.6M392.7 276.1H399.9" stroke="#d9a594" stroke-width="0.6"/>
<rect x="376.9" y="302.9" width="7.2" height="7" fill="#fff"/>
<path d="M380.5 302.9V309.9M376.9 306.4H384.1" stroke="#d9a594" stroke-width="0.6"/>
<rect x="392.7" y="302.9" width="7.2" height="7" fill="#fff"/>
<path d="M396.3 302.9V309.9M392.7 306.4H399.9" stroke="#d9a594" stroke-width="0.6"/>
<rect x="376.9" y="333.2" width="7.2" height="7" fill="#fff"/>
<path d="M380.5 333.2V340.2M376.9 336.7H384.1" stroke="#d9a594" stroke-width="0.6"/>
<rect x="392.7" y="333.2" width="7.2" height="7" fill="#fff"/>
<path d="M396.3 333.2V340.2M392.7 336.7H399.9" stroke="#d9a594" stroke-width="0.6"/>
<rect x="376.9" y="363.5" width="7.2" height="7" fill="#fff"/>
<path d="M380.5 363.5V370.5M376.9 367H384.1" stroke="#d9a594" stroke-width="0.6"/>
<rect x="392.7" y="363.5" width="7.2" height="7" fill="#fff"/>
<path d="M396.3 363.5V370.5M392.7 367H399.9" stroke="#d9a594" stroke-width="0.6"/>
<rect x="375.3" y="392.5" width="7.2" height="7" fill="#fff"/>
<path d="M378.9 392.5V399.5M375.3 396H382.5" stroke="#d9a594" stroke-width="0.6"/>
<rect x="394.3" y="392.5" width="7.2" height="7" fill="#fff"/>
<path d="M397.9 392.5V399.5M394.3 396H401.5" stroke="#d9a594" stroke-width="0.6"/>
<rect x="384.4" y="395.8" width="8.2" height="16.5" fill="#7a3a22"/>
<path d="M388.3 210L368.2 231.3H408.4Z" fill="url(#tiles)"/>
<text x="388.3" y="435.3" text-anchor="middle" font-family="Liberation Sans" font-size="18.5" fill="#141414" stroke="#141414" stroke-width="0.6">Д</text>
<rect x="432" y="200.2" width="29" height="212.1" fill="url(#brick)"/>
<rect x="432" y="200.2" width="29" height="212.1" fill="url(#bedge)"/>
<rect x="432" y="229.9" width="29" height="1" fill="#9a3a1e" opacity="0.85"/>
<rect x="432" y="260.2" width="29" height="1" fill="#9a3a1e" opacity="0.85"/>
<rect x="432" y="290.5" width="29" height="1" fill="#9a3a1e" opacity="0.85"/>
<rect x="432" y="320.8" width="29" height="1" fill="#9a3a1e" opacity="0.85"/>
<rect x="432" y="351.1" width="29" height="1" fill="#9a3a1e" opacity="0.85"/>
<rect x="432" y="381.4" width="29" height="1" fill="#9a3a1e" opacity="0.85"/>
<rect x="435.1" y="212" width="7.2" height="7" fill="#fff"/>
<path d="M438.7 212V219M435.1 215.5H442.3" stroke="#d9a594" stroke-width="0.6"/>
<rect x="450.9" y="212" width="7.2" height="7" fill="#fff"/>
<path d="M454.5 212V219M450.9 215.5H458.1" stroke="#d9a594" stroke-width="0.6"/>
<rect x="435.1" y="242.3" width="7.2" height="7" fill="#fff"/>
<path d="M438.7 242.3V249.3M435.1 245.8H442.3" stroke="#d9a594" stroke-width="0.6"/>
<rect x="450.9" y="242.3" width="7.2" height="7" fill="#fff"/>
<path d="M454.5 242.3V249.3M450.9 245.8H458.1" stroke="#d9a594" stroke-width="0.6"/>
<rect x="435.1" y="272.6" width="7.2" height="7" fill="#fff"/>
<path d="M438.7 272.6V279.6M435.1 276.1H442.3" stroke="#d9a594" stroke-width="0.6"/>
<rect x="450.9" y="272.6" width="7.2" height="7" fill="#fff"/>
<path d="M454.5 272.6V279.6M450.9 276.1H458.1" stroke="#d9a594" stroke-width="0.6"/>
<rect x="435.1" y="302.9" width="7.2" height="7" fill="#fff"/>
<path d="M438.7 302.9V309.9M435.1 306.4H442.3" stroke="#d9a594" stroke-width="0.6"/>
<rect x="450.9" y="302.9" width="7.2" height="7" fill="#fff"/>
<path d="M454.5 302.9V309.9M450.9 306.4H458.1" stroke="#d9a594" stroke-width="0.6"/>
<rect x="435.1" y="333.2" width="7.2" height="7" fill="#fff"/>
<path d="M438.7 333.2V340.2M435.1 336.7H442.3" stroke="#d9a594" stroke-width="0.6"/>
<rect x="450.9" y="333.2" width="7.2" height="7" fill="#fff"/>
<path d="M454.5 333.2V340.2M450.9 336.7H458.1" stroke="#d9a594" stroke-width="0.6"/>
<rect x="435.1" y="363.5" width="7.2" height="7" fill="#fff"/>
<path d="M438.7 363.5V370.5M435.1 367H442.3" stroke="#d9a594" stroke-width="0.6"/>
<rect x="450.9" y="363.5" width="7.2" height="7" fill="#fff"/>
<path d="M454.5 363.5V370.5M450.9 367H458.1" stroke="#d9a594" stroke-width="0.6"/>
<rect x="433.5" y="392.5" width="7.2" height="7" fill="#fff"/>
<path d="M437.1 392.5V399.5M433.5 396H440.7" stroke="#d9a594" stroke-width="0.6"/>
<rect x="452.5" y="392.5" width="7.2" height="7" fill="#fff"/>
<path d="M456.1 392.5V399.5M452.5 396H459.7" stroke="#d9a594" stroke-width="0.6"/>
<rect x="442.6" y="395.8" width="8.2" height="16.5" fill="#7a3a22"/>
<path d="M446.5 179.7L426.4 201H466.6Z" fill="url(#tiles)"/>
<text x="446.5" y="435.3" text-anchor="middle" font-family="Liberation Sans" font-size="18.5" fill="#141414" stroke="#141414" stroke-width="0.6">Е</text>
<path d="M75 352.8H127" stroke="#333" stroke-width="1.4" stroke-dasharray="2.8 1.8"/>
<path d="M127 291Q141 294 141 306Q141 318 127 321.5Q141 325 141 337Q141 349 127 352.8" fill="none" stroke="#333" stroke-width="1.4" stroke-dasharray="2.8 1.8"/>
<text x="41" y="116" font-family="Liberation Sans" font-size="15" font-weight="bold" fill="#1a74bd" textLength="133" lengthAdjust="spacingAndGlyphs">Үйлерді салыстыр.</text>
<text x="41" y="136" font-family="Liberation Sans" font-size="15" fill="#1a74bd" textLength="187" lengthAdjust="spacingAndGlyphs">Әрбір үйде неше қабат бар?</text>
<text x="40" y="472" font-family="Liberation Sans" font-size="14.5" font-weight="bold" font-style="italic" fill="#1a74bd" textLength="214" lengthAdjust="spacingAndGlyphs">А үйі Ә үйінен 2 қабатқа аласа.</text>
<text x="40" y="500" font-family="Liberation Sans" font-size="14.5" fill="#1a74bd" textLength="220" lengthAdjust="spacingAndGlyphs">Д үйі В үйінен неше қабатқа биік?</text>
<text x="40" y="523" font-family="Liberation Sans" font-size="14.5" fill="#1a74bd" textLength="222" lengthAdjust="spacingAndGlyphs">Г үйі Е үйінен неше қабатқа аласа?</text>
<path d="M375 521.5H529" stroke="#c9cde8" stroke-width="1.5"/>
<path d="M376 520.3H530" stroke="#2a3c9c" stroke-width="2.2" stroke-dasharray="0.1 5.75" stroke-linecap="round"/>
</svg>
<!-- /PDF -->
<div class="a" style="left:37px;top:176px;width:1312px;height:1px;background:#a3a6a9"></div>
<!-- status bar -->
<div class="a" style="left:0;top:699px;width:1366px;height:29px;background:#f0f0f0"></div>
<svg class="a" style="left:540px;top:699px" width="280" height="29">
 <g fill="#222" stroke="#fff" stroke-width="1.3" stroke-linejoin="round" paint-order="stroke">
 <path d="M19.3 7.6V21L11.8 14.3Z"/><path d="M21 11L24 7.6V21L21 17.6Z"/>
 <path d="M46.2 7.6V21L38.7 14.3Z"/>
 <path d="M181.6 7.6V20.8L189 14.2Z"/>
 <path d="M205 7.6L208.3 11V17.5L205 20.8Z"/><path d="M209.8 7.6V20.8L217.2 14.2Z"/>
 </g>
</svg>
<div class="a" style="left:597px;top:703px;width:116px;height:20px;background:#fff;border:1px solid #a8a8a8"></div>
<div class="t" style="left:603px;top:706px;color:#111;font-size:13px">43 / 140</div>
<svg class="a" style="left:700px;top:710px" width="8" height="5"><path d="M0 0H7L3.5 4Z" fill="#111"/></svg>
<svg class="a" style="left:765px;top:703px" width="50" height="22">
 <rect x="4.5" y="3.5" width="8" height="11" fill="#fff" stroke="#666" stroke-width="1"/><rect x="4" y="3" width="9" height="1.6" fill="#2f6db3"/>
 <path d="M6 7H7M8.5 7H11M6 9.5H7M8.5 9.5H11M6 12H7" stroke="#777" stroke-width="0.9"/>
 <rect x="9.5" y="9.5" width="10" height="9" fill="#fff" stroke="#666" stroke-width="1.1"/><rect x="9" y="9" width="11" height="1.5" fill="#666"/>
 <path d="M11 12.5H12M13.5 12.5H15M16.5 12.5H18M11 15H12M13.5 15H15M16.5 15H18M11 17H12M13.5 17H15M16.5 17H18" stroke="#666" stroke-width="0.9"/>
 <path d="M20 6H14M16.5 3.5L14 6L16.5 8.5" fill="none" stroke="#3aa776" stroke-width="1.5"/>
 <g opacity="0.45"><rect x="30.5" y="3.5" width="10" height="9" fill="#fff" stroke="#666" stroke-width="1"/><path d="M32 6.5H39M32 9H39" stroke="#777" stroke-width="0.9"/><rect x="35.5" y="9.5" width="10" height="9" fill="#fff" stroke="#666" stroke-width="1"/><rect x="35" y="9" width="11" height="1.6" fill="#2f6db3"/><path d="M37 13H44M37 15.5H44" stroke="#777" stroke-width="0.9"/><path d="M29.5 15.5H36M34 13L36.5 15.5L34 18" fill="none" stroke="#3aa776" stroke-width="1.5"/></g>
</svg>
<div class="a" style="left:1050px;top:705px;width:24px;height:18px;background:#d5b8e4"></div>
<svg class="a" style="left:1025px;top:699px" width="340" height="29">
 <g fill="none" stroke="#6b6b6b" stroke-width="1">
  <rect x="5.5" y="8.5" width="10" height="13"/>
  <rect x="30.5" y="7.5" width="10" height="7"/><path d="M30.5 23.5V17.5H40.5V23.5"/>
  <rect x="54.5" y="9.5" width="6" height="12"/><rect x="62.5" y="9.5" width="6" height="12"/>
  <path d="M79.5 7V14.5H85.5M87.5 7V14.5H94.5M79.5 23.5V17.5H85.5M87.5 23.5V17.5H94.5"/>
 </g>
 <g fill="none" stroke="#8a8a8a" stroke-width="0.8">
  <path d="M7.5 11.5H13.5M7.5 14H13.5M7.5 16.5H13.5M7.5 19H13.5"/>
  <path d="M32.5 10H38.5M32.5 12.3H38.5M32.5 20H38.5"/>
  <path d="M56 12.5H59M56 15.5H59M56 18.5H59M64 12.5H67M64 15.5H67M64 18.5H67"/>
  <path d="M80 9.5H85M80 12H85M88 9.5H94M88 12H94M80 20H85M88 20H94"/>
 </g>
 <path d="M179 13H185L182 16.5Z" fill="#111"/>
 <circle cx="196" cy="14" r="7" fill="none" stroke="#333" stroke-width="1.1"/><path d="M192 14H200" stroke="#333" stroke-width="1.2"/>
 <path d="M211 14H302" stroke="#333" stroke-width="1.2"/><rect x="239" y="9.5" width="4" height="9" fill="#222"/><rect x="255.5" y="11" width="1" height="6" fill="#222"/>
 <circle cx="314" cy="14" r="7" fill="none" stroke="#333" stroke-width="1.1"/><path d="M310 14H318M314 10V18" stroke="#333" stroke-width="1.2"/>
</svg>
<div class="t" style="left:1143px;top:706px;color:#333;font-size:13px">69.64%</div>

<!-- taskbar -->
<div class="a" style="left:0;top:728px;width:1366px;height:40px;background:linear-gradient(90deg,#38aac2 0%,#3aa4bc 45%,#3797b5 70%,#2f84aa 100%)"></div>
<svg class="a" style="left:0;top:728px" width="60" height="40"><path d="M0 0H8L2 40H0Z" fill="#5cc0d0" opacity="0.35"/><path d="M10.9 11L23.9 9.2V21H10.9ZM25.7 8.6L41 6.9V21H25.7ZM10.9 23H23.9V34.5L10.9 33ZM25.7 23H41V37L25.7 35Z" fill="#fff"/></svg>
<div class="a" style="left:60px;top:729px;width:99px;height:38px;background:#5ab3c7;border:1px solid #7ec6d5"></div>
<svg class="a" style="left:64px;top:733px" width="32" height="32"><path d="M3 4Q3 2 5 2H29V26L27 29H3Z" fill="#f4f7fc" stroke="#1f3f8a" stroke-width="1.3"/><path d="M4 4H28V12Q16 9 4 14Z" fill="#c9d9f2"/><path d="M5 7H10.5L12.5 17L15 7H18.5L21 17L23 7H28L23.5 23H19L16.8 13.5L14.5 23H10Z" fill="#1d56b8"/><path d="M18 22L30 19L31 26L20 29Z" fill="#fff" stroke="#8aa0c0" stroke-width="0.7"/><path d="M4 27Q14 21 29 25" stroke="#9fb5d9" stroke-width="1" fill="none"/></svg>
<div class="t" style="left:103px;top:741px;color:#fff;font-size:12px">Матем...</div>
<div class="a" style="left:161px;top:729px;width:99px;height:38px;background:#5ab3c7;border:1px solid #7ec6d5"></div>
<svg class="a" style="left:165px;top:733px" width="32" height="32"><path d="M3 4Q3 2 5 2H29V26L27 29H3Z" fill="#f4f7fc" stroke="#1f3f8a" stroke-width="1.3"/><path d="M4 4H28V12Q16 9 4 14Z" fill="#c9d9f2"/><path d="M5 7H10.5L12.5 17L15 7H18.5L21 17L23 7H28L23.5 23H19L16.8 13.5L14.5 23H10Z" fill="#1d56b8"/><path d="M18 22L30 19L31 26L20 29Z" fill="#fff" stroke="#8aa0c0" stroke-width="0.7"/><path d="M4 27Q14 21 29 25" stroke="#9fb5d9" stroke-width="1" fill="none"/></svg>
<div class="t" style="left:204px;top:741px;color:#fff;font-size:12px">Кальен...</div>
<div class="a" style="left:262px;top:729px;width:99px;height:38px;background:#5ab3c7;border:1px solid #7ec6d5"></div>
<svg class="a" style="left:266px;top:733px" width="32" height="32"><path d="M3 4Q3 2 5 2H29V26L27 29H3Z" fill="#f4f7fc" stroke="#1f3f8a" stroke-width="1.3"/><path d="M4 4H28V12Q16 9 4 14Z" fill="#c9d9f2"/><path d="M5 7H10.5L12.5 17L15 7H18.5L21 17L23 7H28L23.5 23H19L16.8 13.5L14.5 23H10Z" fill="#1d56b8"/><path d="M18 22L30 19L31 26L20 29Z" fill="#fff" stroke="#8aa0c0" stroke-width="0.7"/><path d="M4 27Q14 21 29 25" stroke="#9fb5d9" stroke-width="1" fill="none"/></svg>
<div class="t" style="left:305px;top:741px;color:#fff;font-size:12px">Матем...</div>
<div class="a" style="left:364px;top:729px;width:99px;height:38px;background:#5ab3c7;border:1px solid #7ec6d5"></div>
<svg class="a" style="left:372px;top:733px" width="32" height="32"><circle cx="15" cy="15" r="14.5" fill="#dd4b39"/><path d="M15 15L2.4 22.2A14.5 14.5 0 0 0 15 29.5Z" fill="#1e9a50"/><path d="M15 15L2.4 22.2A14.5 14.5 0 0 1 2.4 7.8L15 15Z" fill="#1e9a50"/><path d="M15 15L27.6 22.2A14.5 14.5 0 0 1 15 29.5Z" fill="#fcc934"/><path d="M15 15L27.6 7.8A14.5 14.5 0 0 1 27.6 22.2Z" fill="#fcc934"/><circle cx="15" cy="15" r="6.5" fill="#fff"/><circle cx="15" cy="15" r="5" fill="#4a86e8"/></svg>
<div class="t" style="left:407px;top:741px;color:#fff;font-size:12px">Отправ...</div>
<div class="a" style="left:467px;top:729px;width:99px;height:38px;background:#5ab3c7;border:1px solid #7ec6d5"></div>
<svg class="a" style="left:476px;top:733px" width="30" height="32"><path d="M3 2L10 4V30L3 27Z" fill="#d9a940"/><path d="M5 3L19 5V29L5 30Z" fill="#fbeeb8"/><path d="M10 4L22 6.5V30.5L10 30Z" fill="#f3d47a"/><path d="M10 4L10 30" stroke="#e0b550" stroke-width="1"/><path d="M20.5 22V28" stroke="#777" stroke-width="1"/></svg>
<div class="t" style="left:510px;top:741px;color:#fff;font-size:12px">матем ...</div>
<div class="a" style="left:568px;top:729px;width:100px;height:38px;background:#5ab3c7;border:1px solid #7ec6d5"></div>
<svg class="a" style="left:577px;top:733px" width="30" height="32"><path d="M3 2L10 4V30L3 27Z" fill="#d9a940"/><path d="M5 3L19 5V29L5 30Z" fill="#fbeeb8"/><path d="M10 4L22 6.5V30.5L10 30Z" fill="#f3d47a"/><path d="M10 4L10 30" stroke="#e0b550" stroke-width="1"/><path d="M20.5 22V28" stroke="#777" stroke-width="1"/></svg>
<div class="t" style="left:611px;top:741px;color:#fff;font-size:12px">1-сыны...</div>
<div class="a" style="left:672px;top:729px;width:99px;height:38px;background:#5ab3c7;border:1px solid #7ec6d5"></div>
<svg class="a" style="left:679px;top:732px" width="34" height="34"><circle cx="15" cy="15" r="13.5" fill="#33a34a"/><path d="M5 27L4 32L10 28Z" fill="#33a34a"/><circle cx="15" cy="15" r="9" fill="none" stroke="#fff" stroke-width="2.5"/><circle cx="15" cy="15" r="4" fill="none" stroke="#fff" stroke-width="2"/><rect x="17" y="19" width="15" height="11" fill="#fff" stroke="#6a8ab5" stroke-width="1"/><path d="M17 19L24.5 25L32 19" fill="none" stroke="#6a8ab5" stroke-width="1"/></svg>
<div class="t" style="left:715px;top:741px;color:#fff;font-size:12px">Mail.Ru...</div>
<div class="a" style="left:772px;top:729px;width:99px;height:38px;background:#5ab3c7;border:1px solid #7ec6d5"></div>
<svg class="a" style="left:779px;top:735px" width="34" height="28"><rect x="1.5" y="3.5" width="30" height="21" fill="#f5f8fc" stroke="#6a8ab5" stroke-width="1.2"/><path d="M1.5 3.5L16.5 16L31.5 3.5M1.5 24.5L12 13M31.5 24.5L21 13" fill="none" stroke="#6a8ab5" stroke-width="1.2"/></svg>
<div class="t" style="left:815px;top:741px;color:#fff;font-size:12px">101 неп...</div>
<div class="a" style="left:875px;top:729px;width:98px;height:38px;background:#86bfcf;border:1px solid #c2e2ea"></div>
<svg class="a" style="left:881px;top:732px" width="34" height="34"><path d="M0 0H25V6H32V32H0Z" fill="#6a2570"/><path d="M26 0L32 5.5H26Z" fill="#6a2570"/><path d="M3 3L30 30L20 30L3 10Z" fill="#fff" opacity="0.12"/>
<circle cx="14" cy="13" r="8" fill="#fff"/><path d="M11.5 15Q10.5 9 16.5 8.5Q20.5 8.5 21 12Q18 11 16.5 12.5Q15.5 14 18 16.5Q14.5 18.5 11.5 15Z" fill="#6a2570"/><path d="M18 5.5Q22 6 23 10" stroke="#fff" stroke-width="1.2" fill="none"/>
<text x="7.5" y="30" font-family="Liberation Sans" font-size="8" font-weight="bold" fill="#fff" textLength="14" lengthAdjust="spacingAndGlyphs">PDF</text></svg>
<div class="t" style="left:918px;top:741px;color:#fff;font-size:12px">Матем...</div>
<svg class="a" style="left:980px;top:728px" width="270" height="40">
 <rect x="3.5" y="15.5" width="15" height="10" fill="#eef2f8" stroke="#7a8cb0" stroke-width="1"/><path d="M3.5 15.5L11 21.5L18.5 15.5M3.5 25.5L9 20M18.5 25.5L13 20" fill="none" stroke="#7a8cb0" stroke-width="0.9"/>
 <circle cx="35" cy="21" r="8" fill="#e0302a"/><path d="M29 18.5L41 16M40.5 17.5L29.5 24.5M29 26L41 23.5" stroke="#fff" stroke-width="1.5" fill="none"/>
 <path d="M52 17.5H55L59.5 13.5V28.5L55 24.5H52Z" fill="#fff" stroke="#555" stroke-width="0.5"/><path d="M61.5 17Q63.5 21 61.5 25M64 15Q67 21 64 27" stroke="#fff" stroke-width="1.3" fill="none"/>
 <path d="M83 13L91 28H75Z" fill="#e23a2e"/><rect x="82.2" y="17.5" width="1.6" height="6" fill="#fff"/><rect x="82.2" y="24.5" width="1.6" height="1.6" fill="#fff"/>
 <circle cx="107" cy="21" r="8" fill="#fff"/><g fill="#f7c51e"><circle cx="107" cy="17.5" r="2.2"/><circle cx="110.3" cy="20" r="2.2"/><circle cx="109" cy="24" r="2.2"/><circle cx="105" cy="24" r="2.2"/><circle cx="103.7" cy="20" r="2.2"/></g><circle cx="107" cy="21" r="1.5" fill="#e02b20"/><circle cx="107" cy="17.5" r="1" fill="#e02b20"/><circle cx="109" cy="24" r="1" fill="#e02b20"/>
 <circle cx="131" cy="21" r="3.8" fill="#3d7fd6"/><ellipse cx="131" cy="21" rx="7.5" ry="2" fill="none" stroke="#dfe8f5" stroke-width="1" transform="rotate(-18 131 21)"/>
 <circle cx="158" cy="18" r="5.5" fill="#3a7bd5"/><rect x="157" y="14.5" width="2" height="4.5" fill="#fff"/><rect x="157" y="20" width="2" height="1.5" fill="#fff"/><rect x="149" y="22" width="8" height="5" fill="#fff" stroke="#333" stroke-width="0.8"/><rect x="148" y="27" width="10" height="2" fill="#333"/>
 <path d="M171 17.5H174.5L180 13V29L174.5 24.5H171Z" fill="#e8622a"/><path d="M182 17Q184 21 182 25M184.5 15Q187.5 21 184.5 27" stroke="#333" stroke-width="1.2" fill="none"/>
 <circle cx="203" cy="21" r="8" fill="#f3a92a"/><path d="M203 21L196 17A8 8 0 0 1 208 14Z" fill="#3b8ed8"/><path d="M203 21L208 14A8 8 0 0 1 211 21Z" fill="#e04a3a"/><path d="M203 21L211 21A8 8 0 0 1 205 28.5Z" fill="#3cae4a"/>
 <path d="M221 14V18M224 14V18M220 18H225V23H223.5V29H221.5V23H220Z" fill="#fff" stroke="#fff" stroke-width="0.8"/><rect x="228.5" y="14.5" width="6.5" height="14" rx="1" fill="none" stroke="#fff" stroke-width="1.3"/><rect x="230.5" y="19" width="2.5" height="8" fill="#fff"/>
 <g fill="#fff"><rect x="243" y="24" width="2.2" height="3"/><rect x="246.3" y="22" width="2.2" height="5"/><rect x="249.6" y="19" width="2.2" height="8"/><rect x="252.9" y="16.5" width="2.2" height="10.5"/><rect x="256.2" y="14" width="2.2" height="13"/></g>
</svg>
<div class="t" style="left:1254px;top:742px;color:#fff">ҚАЗ</div>
<div class="t" style="left:1307px;top:734px;color:#fff;letter-spacing:-0.5px">23:18</div>
<div class="t" style="left:1293px;top:751px;color:#fff;letter-spacing:-0.5px">29.08.2016</div>
</body></html>
